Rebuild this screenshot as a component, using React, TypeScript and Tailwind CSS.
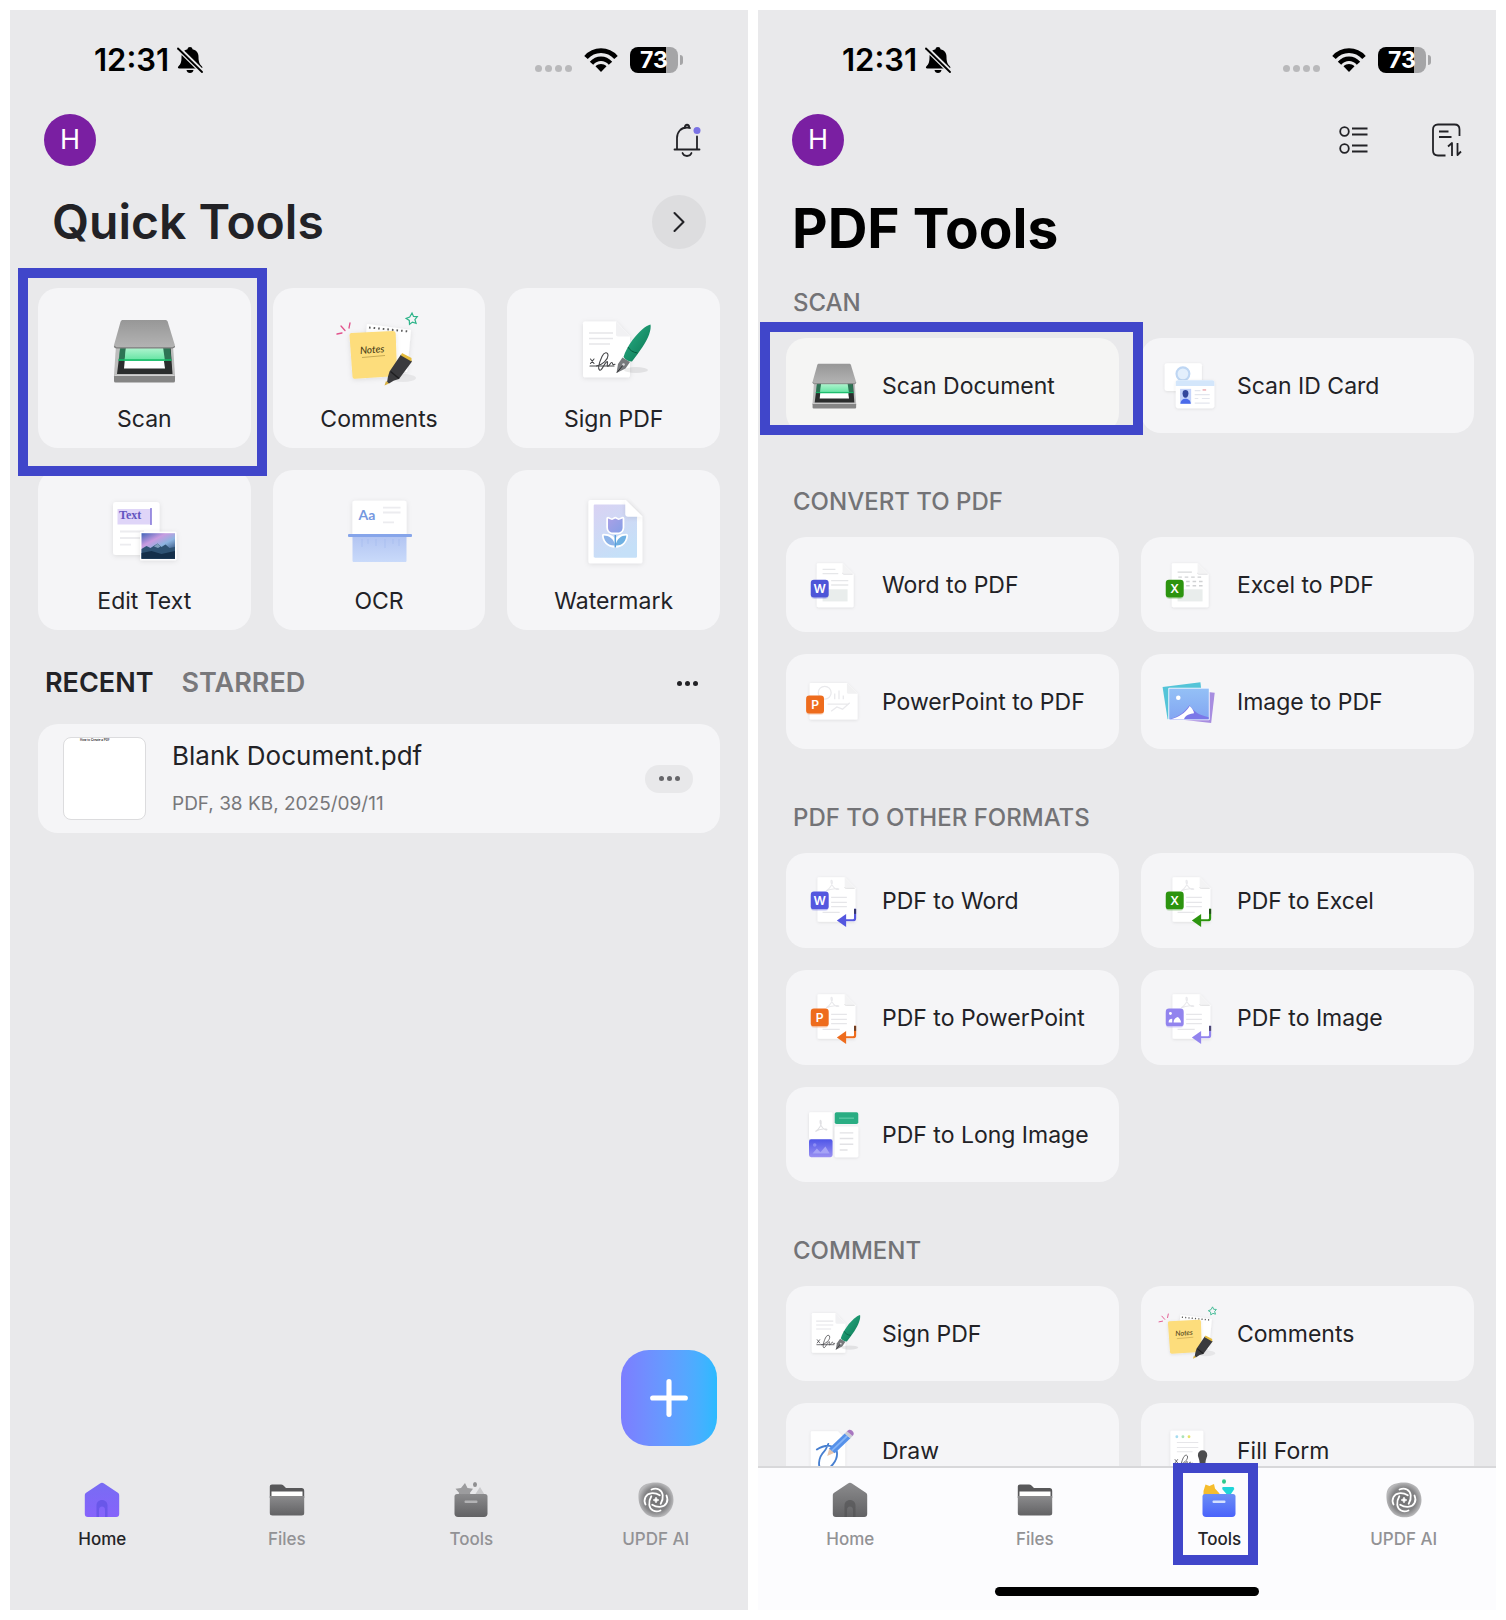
import type { ReactNode } from "react";
import { ChevronRight, Plus } from "lucide-react";

type Tool = {
  name: string;
  icon: ReactNode;
  highlighted?: boolean;
};

type Section = {
  title: string;
  tools: Tool[];
};

/* ---------- Tool artwork, all on an 84 x 84 canvas ---------- */

function Art({ children }: { children: ReactNode }) {
  return (
    <svg
      viewBox="0 0 84 84"
      className="h-full w-full overflow-visible"
      aria-hidden="true"
    >
      <defs>
        <filter id="paper" x="-30%" y="-30%" width="160%" height="160%">
          <feDropShadow dx="0" dy="1" stdDeviation="2.5" floodOpacity="0.1" />
        </filter>
      </defs>
      {children}
    </svg>
  );
}

function ScannerIcon() {
  return (
    <Art>
      <defs>
        <linearGradient id="lid" x1="0" y1="0" x2="0" y2="1">
          <stop offset="0" stopColor="#979797" />
          <stop offset="1" stopColor="#b4b4b4" />
        </linearGradient>
        <linearGradient id="glow" x1="0" y1="0" x2="0" y2="1">
          <stop offset="0" stopColor="#b5f5d2" />
          <stop offset="1" stopColor="#5fe3a0" />
        </linearGradient>
      </defs>
      <path d="M14 36h57l2 30-1 2H13l-1-2z" fill="#bdbdbd" />
      <path d="M18.500 37h50l2 28H15z" fill="#2b2d2d" />
      <path d="M24 38h36l3 21.500H22z" fill="#fff" />
      <path d="M18 38h50l1.500 14H16.500z" fill="#2fae74" opacity="0.550" />
      <path d="M24 38h37l2 14H22.500z" fill="url(#glow)" />
      <path d="M16.500 51h53" stroke="#14b866" strokeWidth="1.300" />
      <rect x="12" y="66" width="61" height="7.500" rx="1.500" fill="#858585" />
      <path d="M12.500 66.500h60" stroke="#d2d2d2" strokeWidth="1.200" />
      <path
        d="M21 11h42c1.500 0 2.300.6 2.800 2l7 23c.5 2-.3 3-2 3H14c-1.800 0-2.500-1-2-3l6.500-23c.5-1.400 1.200-2 2.500-2z"
        fill="url(#lid)"
      />
      <path d="M12.500 37c.3 1.300 1 1.800 2 1.800h56c1.200 0 1.900-.6 2-1.800" fill="none" stroke="#7e7e7e" strokeWidth="1.200" />
    </Art>
  );
}

function CommentsIcon() {
  return (
    <Art>
      <g stroke="#e2528c" strokeWidth="1.300" strokeLinecap="round">
        <path d="M0 25l5-1M4 17l4 4.500M13 14l-1 5" />
      </g>
      <path d="M30 15l44 6-4 42-44-4z" fill="#fff" filter="url(#paper)" />
      <path d="M32 18.500l40 4" stroke="#5d5d5d" strokeWidth="2" strokeDasharray="1.600 3" />
      <path
        d="M75 4l1.500 3.400 3.800.2-2.400 3 1.200 3.700-3.600-1.200-3 2.200-.2-3.900-3.200-2 3.600-1.400z"
        fill="none"
        stroke="#2eb48a"
        strokeWidth="1.200"
      />
      <path
        d="M14.500 24l41-2c2 0 3 .8 3.200 2.500L60 64c0 2-1 3-3 3.200l-39 2.500c-1.500 0-2.300-.6-2.500-2L12.500 26.500c0-1.500.6-2.400 2-2.500z"
        fill="#fddd7c"
        filter="url(#paper)"
      />
      <g transform="rotate(-4 36 42)">
        <text x="23" y="44" fontSize="10" className="font-['Lato',sans-serif] font-medium italic" fill="#4b4017">
          Notes
        </text>
      </g>
      <path d="M25 48.500l23-2" stroke="#b89c48" strokeWidth="0.800" />
      <ellipse cx="66" cy="69" rx="13" ry="4" fill="#000" opacity="0.060" />
      <path d="M64 45.500l9.500 5 1.500 2-13 17.500-5 1.500-5 3-2-1 1-6 1.500-5z" fill="#3a3a3d" />
      <path d="M65 44l9.500 5v3.500l-10.500-6z" fill="#e6bd3e" />
      <path d="M53.500 62.500l8.500 7" stroke="#1f1f21" strokeWidth="1.500" />
      <path d="M49 72l3 2.500-4.500 2z" fill="#d8b040" />
    </Art>
  );
}

function Signature() {
  return (
    <g fill="none" stroke="#47484b" strokeWidth="1.100" strokeLinecap="round" strokeLinejoin="round">
      <path d="M18.500 50l3.500 4.500M22 50l-3.500 4.500" />
      <path d="M18 57h24" />
      <path d="M24.500 57c6-1 11.500-6.500 11.500-10.500 0-4-4-3.500-6 1-2 4.500-4.500 12-2.500 13.500s4.500-6 7-8-.5 4.500 1.500 4.200 2.300-4 3.800-3.700-.3 3.200 3.200 1.700" />
    </g>
  );
}

function SignIcon() {
  return (
    <Art>
      <defs>
        <linearGradient id="pen" x1="0" y1="0" x2="1" y2="1">
          <stop offset="0" stopColor="#2bb389" />
          <stop offset="1" stopColor="#0a7350" />
        </linearGradient>
      </defs>
      <path
        d="M13 12.500h31l14 15V66c0 1.500-.6 2.300-2 2.300H13c-1.500 0-2-.8-2-2.300V14.500c0-1.300.7-2 2-2z"
        fill="#fff"
        filter="url(#paper)"
      />
      <path d="M44 12.500l14 15H46c-1.500 0-2-.7-2-2z" fill="#f1f1f3" />
      <path d="M17 24h24M17 29.500h24M17 35h21" stroke="#e6e6e9" strokeWidth="1.500" />
      <Signature />
      <ellipse cx="64" cy="61" rx="12" ry="3" fill="#000" opacity="0.080" />
      <path d="M50.500 48.500l7.500 4.500-4.500 6.500-9 4.500 1.500-9z" fill="#77797c" />
      <path d="M45 63.500l6.500-8" stroke="#2c2d30" strokeWidth="1" />
      <circle cx="51.500" cy="55.500" r="1.300" fill="#d9d9db" />
      <path d="M78.500 15.500c1 5-2 14-8 22.500-3.500 5-7 10-10.500 14.500-3.500 0-7-2-8.500-4.500 1.500-5 4.500-11 9-17 6-7.500 13-14.500 18-15.500z" fill="url(#pen)" />
      <path d="M56 38c1.500 3 5 5.500 9.500 6" stroke="#075c40" strokeWidth="1" fill="none" />
    </Art>
  );
}

function EditTextIcon() {
  return (
    <Art>
      <defs>
        <linearGradient id="dusk" x1="0" y1="0" x2="0.700" y2="1">
          <stop offset="0" stopColor="#3f63b8" />
          <stop offset="0.350" stopColor="#c89be0" />
          <stop offset="0.600" stopColor="#8cb4e0" />
          <stop offset="1" stopColor="#17345e" />
        </linearGradient>
      </defs>
      <rect x="11" y="11" width="46.500" height="53" rx="3" fill="#fff" filter="url(#paper)" />
      <rect x="15.500" y="18" width="34" height="15.500" fill="#dfd5f8" />
      <text x="17" y="28" fontSize="12" className="font-['Liberation_Serif',serif] font-bold" fill="#6254bf">
        Text
      </text>
      <path d="M49 17v17" stroke="#6a5bd0" strokeWidth="1.200" />
      <path d="M18 40.500h24M18 47h20M18 53.700h11" stroke="#ececef" strokeWidth="1.800" />
      <rect x="38" y="40.700" width="36.500" height="28.500" rx="1" fill="#fff" filter="url(#paper)" />
      <rect x="39.500" y="42.200" width="33.500" height="25.500" fill="url(#dusk)" />
      <path d="M39.500 58l5-3 4 2 7-4.500 4 3.500 4-2.500 4 3.500 5.500-1v11.700H39.500z" fill="#2e5273" />
      <path d="M52 55.500l3.500-3 3 3-2.500 1.500z" fill="#7f9fbd" />
      <path d="M39.500 62l10-2 10 3 13.500-3v7.700H39.500z" fill="#142f4a" />
    </Art>
  );
}

function OcrIcon() {
  return (
    <Art>
      <defs>
        <linearGradient id="scanned" x1="0" y1="0" x2="0" y2="1">
          <stop offset="0" stopColor="#b3c5f2" />
          <stop offset="1" stopColor="#c9dafa" />
        </linearGradient>
      </defs>
      <path d="M18 9.700h49c1.800 0 2.500.8 2.500 2.500V45h-54V12c0-1.500.8-2.300 2.500-2.300z" fill="#fff" filter="url(#paper)" />
      <text x="21.500" y="29" fontSize="14" className="font-['Lato',sans-serif] font-bold" fill="#7698df">
        Aa
      </text>
      <path d="M46 16.700h17.500M46 21.500h17.500M46 31.300h11" stroke="#ececef" strokeWidth="1.800" />
      <path d="M15.500 46h54v23.500c0 1-.5 1.500-1.500 1.500H17c-1 0-1.500-.5-1.500-1.500z" fill="url(#scanned)" />
      <path d="M25 48v8M31 48v5M39 48v7M48 48v9M56 48v5M62 48v7" stroke="#a3b9ee" strokeWidth="0.600" />
      <rect x="11" y="43" width="64" height="3" rx="1" fill="#86a5ea" />
    </Art>
  );
}

function WatermarkIcon() {
  return (
    <Art>
      <defs>
        <linearGradient id="wash" x1="0" y1="0" x2="0.500" y2="1">
          <stop offset="0" stopColor="#d9d2f3" />
          <stop offset="1" stopColor="#c5e0f8" />
        </linearGradient>
        <linearGradient id="cup" x1="0" y1="0" x2="1" y2="1">
          <stop offset="0" stopColor="#a9a0e6" />
          <stop offset="1" stopColor="#869fe6" />
        </linearGradient>
      </defs>
      <path d="M18.500 9h35L70.300 25.500V70c0 1.500-.6 2.300-2 2.300H18.500c-1.300 0-2-.8-2-2.300V11.300c0-1.500.7-2.300 2-2.300z" fill="#fff" filter="url(#paper)" />
      <path d="M23 13.500h30.500v9c0 2 .8 3 2.800 3H65v40c0 .8-.4 1.200-1.200 1.200H23c-.8 0-1.300-.4-1.300-1.200V14.700c0-.8.500-1.200 1.300-1.200z" fill="url(#wash)" />
      <path d="M53.500 9l16.800 16.500H55.500c-1.300 0-2-.7-2-2z" fill="#fff" filter="url(#paper)" />
      <g stroke="#fff" strokeWidth="3.500" strokeLinejoin="round">
        <path d="M36 27.500l4 2 3.300-2 3.300 2 4-2v9c0 3-2 5-5 5h-4.600c-3 0-5-2-5-5z" />
        <path d="M43.300 55C36 55 32 50 31.700 44.500c5 0 10 2 11.600 7 1.600-5 6-7 11-7C54 50 50 55 43.300 55z" />
      </g>
      <path d="M36 27.500l4 1.500 3.300-1.500 3.300 1.500 4-1.500v9c0 3-2 5-5 5h-4.600c-3 0-5-2-5-5z" fill="url(#cup)" />
      <path d="M43 54.500C36 55 32 50 31.700 44.500c5 0 10.300 3 11.300 10z" fill="#8db3e8" />
      <path d="M43.700 54.500C50.500 55 54 50 54.300 44.500c-5 0-9.600 3-10.600 10z" fill="#6fb0e2" />
      <path d="M43.300 44v12.500" stroke="#5aa0dc" strokeWidth="1.500" />
    </Art>
  );
}

function IdCardIcon() {
  return (
    <Art>
      <rect x="8" y="10" width="52" height="39" rx="3" fill="#fff" filter="url(#paper)" />
      <circle cx="33.500" cy="25" r="9" fill="#e3effc" stroke="#bed6f3" strokeWidth="3" />
      <rect x="23.500" y="34" width="54" height="39" rx="3" fill="#fff" filter="url(#paper)" />
      <path d="M26.500 34h48c2 0 3 1 3 3v5h-54v-5c0-2 1-3 3-3z" fill="#d3e6fb" />
      <rect x="29.500" y="46" width="15.500" height="21" fill="#c3d3fb" />
      <path d="M33 52c0-3 1.500-4.500 4-4.500s4.200 1.500 4.200 4.500-1.500 6.500-4.200 6.500-4-3.500-4-6.500z" fill="#32469c" />
      <path d="M30 67c.5-5 3-7 7-7s7 2 7.500 7z" fill="#4b6bea" />
      <path d="M50 48.500h8M50 54h21M50 59.500h5M60 59.500h11M50 66h21" stroke="#e3e6ee" strokeWidth="1.600" />
      <path d="M61 47.500h5" stroke="#efb7bd" strokeWidth="2.400" />
    </Art>
  );
}

function Badge({
  x,
  y,
  color,
  letter,
}: {
  x: number;
  y: number;
  color: string;
  letter?: string;
}) {
  return (
    <g>
      <rect x={x} y={y + 2} width="25" height="25" rx="5" fill={color} opacity="0.250" />
      <rect x={x} y={y} width="25" height="25" rx="4.500" fill={color} />
      {letter ? (
        <text
          x={x + 12.5}
          y={y + 18.5}
          fontSize="17"
          textAnchor="middle"
          className="font-['Inter',sans-serif] font-semibold"
          fill="#fff"
        >
          {letter}
        </text>
      ) : (
        <g transform={`translate(${x} ${y})`} fill="#fff">
          <circle cx="6.500" cy="7" r="2" />
          <path d="M4 19c0-3 2-4.500 5-4.500v5H4zM11 19.500c0-5 3.500-7 6-7.500 2 2 4 4 4.500 7.500z" />
        </g>
      )}
    </g>
  );
}

function FileToPdfIcon({ color, letter }: { color: string; letter: string }) {
  return (
    <Art>
      <path d="M20 11.500h34l15.500 15.500v44c0 1.500-.6 2-2 2H20c-1.400 0-2-.5-2-2V13.500c0-1.300.6-2 2-2z" fill="#fff" filter="url(#paper)" />
      <path d="M54 11.500L69.500 27H56c-1.400 0-2-.6-2-2z" fill="#f3f3f4" />
      <path d="M54 25c0 1.400.6 2 2 2h12" fill="none" stroke="#e1e1e3" strokeWidth="1.200" />
      {letter === "X" ? (
        <g strokeWidth="2">
          <path d="M26 24h20" stroke="#dcdddf" />
          <path d="M27 31h32M38 37h24M38 43h24" stroke="#d0d1d3" strokeDasharray="5 4" />
        </g>
      ) : (
        <path d="M26 20h18M26 26h22M38 36h24M38 42h24" stroke="#e6e7e9" strokeWidth="1.800" />
      )}
      <rect x="26" y="48" width="35" height="17" fill="#e9edec" />
      <Badge x={9.5} y={34.5} color={color} letter={letter} />
    </Art>
  );
}

function SlidesToPdfIcon() {
  return (
    <Art>
      <path d="M10 15.500h50l15 15V65c0 1-.5 1.500-1.500 1.500H10c-1.200 0-2-.5-2-1.500V17c0-1 .8-1.500 2-1.500z" fill="#fff" filter="url(#paper)" />
      <path d="M60 15.500l15 15H62c-1.400 0-2-.6-2-2z" fill="#f1f1f2" />
      <g fill="none" stroke="#e9e9ec" strokeWidth="1.800">
        <circle cx="29" cy="29" r="9" />
        <path d="M43 38v-8M49 38V26M55 38v-5M38 55l8-6 8 3 10-9M33 45h30" />
      </g>
      <Badge x={3} y={33} color="#ee6c1d" letter="P" />
    </Art>
  );
}

function ImageToPdfIcon() {
  return (
    <Art>
      <defs>
        <linearGradient id="sky" x1="0" y1="0" x2="0" y2="1">
          <stop offset="0" stopColor="#94c0f6" />
          <stop offset="1" stopColor="#82a6f2" />
        </linearGradient>
      </defs>
      <path d="M5 21l53-6.500 5 45-51 6.500z" fill="#54c4d8" />
      <path d="M24 23l54 6-5 42.500-52-6z" fill="#a78de0" />
      <rect x="13" y="22" width="58" height="45.500" rx="1.500" fill="#f5f8ff" />
      <rect x="14.300" y="23.300" width="55.400" height="42.900" fill="url(#sky)" />
      <circle cx="27" cy="36" r="3.200" fill="#fff" />
      <path d="M14.500 66.200c10-2 20-8 28-19.500 7 9 13 14 27 16.500v3z" fill="#7b78e8" />
      <path d="M17 66.200c11-3 19-8 26-18.500 4 4 6 8 6 10-5 1-12 2-14 8.500z" fill="#fff" />
    </Art>
  );
}

function PdfToFileIcon({ color, letter }: { color: string; letter?: string }) {
  return (
    <Art>
      <path d="M21 8.700h36l15 15.500V69c0 1.300-.6 2-2 2H21c-1.400 0-2-.7-2-2V10.500c0-1.300.6-1.800 2-1.800z" fill="#fff" filter="url(#paper)" />
      <path d="M57 8.700l15 15.500H59c-1.400 0-2-.6-2-2z" fill="#f3f3f4" />
      <path d="M57 22.500c0 1.300.6 1.900 2 1.900h12" fill="none" stroke="#dedee0" strokeWidth="1.200" />
      <path d="M31 28c6-4 10-11 8.500-14s-3 1 0 6 7 7 9 5.500-10-1-17.500 2.500z" fill="none" stroke="#e9e9ec" strokeWidth="1.500" />
      <path d="M38 37h22M38 44h22M38 50h22M26 58h24" stroke="#e6e6e9" strokeWidth="1.800" />
      <Badge x={9.5} y={28.7} color={color} letter={letter} />
      <path d="M71.500 53v13c0 2-1 3-3 3H57" fill="none" stroke={color} strokeWidth="3" />
      <path d="M71.500 53v7" stroke="#202124" strokeWidth="3" opacity="0.600" />
      <path d="M46 69.300l13-9v18z" fill={color} />
    </Art>
  );
}

function LongImageIcon() {
  return (
    <Art>
      <defs>
        <linearGradient id="shot" x1="0" y1="0" x2="0" y2="1">
          <stop offset="0" stopColor="#4f56e8" />
          <stop offset="1" stopColor="#9a90f2" />
        </linearGradient>
      </defs>
      <rect x="7" y="10" width="33" height="38" rx="2" fill="#fff" filter="url(#paper)" />
      <path d="M16 37c6-4 9-10 8-14s-3 1 0 6 7 7 8 5.500-9-1.500-16 2.500z" fill="none" stroke="#e0e0e3" strokeWidth="1.500" />
      <rect x="7" y="48" width="33" height="25" rx="3" fill="url(#shot)" />
      <circle cx="15" cy="56" r="2.500" fill="#8d8df4" />
      <path d="M12 68l6-7 5 5 7-8 6 10z" fill="#a6a3f6" />
      <rect x="43" y="30" width="33" height="43" rx="2" fill="#fff" filter="url(#paper)" />
      <path d="M50 39h19M50 47h19M50 55h19M50 63h11" stroke="#e2e2e5" strokeWidth="2" />
      <rect x="43" y="10" width="33" height="16.500" rx="2.500" fill="#2aad83" />
      <path d="M49 18.500h21" stroke="#57c6a2" strokeWidth="2" />
    </Art>
  );
}

function DrawIcon() {
  return (
    <Art>
      <path d="M11.500 14.500h36l10 10V84h-48V16.500c0-1.300.6-2 2-2z" fill="#fff" filter="url(#paper)" />
      <path d="M18 40c12-8 26-7 28 3 2 12-10 26-19 25s-7-17 1-25c3-3 5-9 6-11" fill="none" stroke="#477fd0" strokeWidth="2.600" strokeLinecap="round" />
      <path d="M32.500 49l3-11 8 6z" fill="#e8c6ac" />
      <path d="M35 38.500l22-21 8 6.500-22 21z" fill="#5591ea" />
      <path d="M39 41.500l22-21" stroke="#83b3f6" strokeWidth="2.500" />
      <path d="M57 17.500l3-3 8 6.500-3 3z" fill="#c9cbd3" />
      <path d="M60 14.500c2.500-3 5-3 7.500-1s3 5 .5 7.500z" fill="#a877c0" />
    </Art>
  );
}

function FillFormIcon() {
  return (
    <Art>
      <rect x="16" y="13.500" width="46" height="72" rx="2" fill="#fff" filter="url(#paper)" />
      <circle cx="25" cy="22" r="2" fill="#a5dcf0" />
      <circle cx="33.500" cy="22" r="2" fill="#a9e3b9" />
      <circle cx="42" cy="22" r="2" fill="#e6e36a" />
      <path d="M25 30h30M25 37h30M25 43h22" stroke="#e6e6e9" strokeWidth="1.500" />
      <g transform="translate(4 4)">
        <Signature />
      </g>
      <path d="M61 41c4 0 6.500 3 6.500 6.500S65 53 65 60l3 4H54l3-4c0-7-2.500-9-2.500-12.500S57 41 61 41z" fill="#4c4c4e" />
      <rect x="50" y="63" width="22" height="6" rx="2" fill="#38383a" />
    </Art>
  );
}

/* ---------- Data ---------- */

const quickTools: Tool[] = [
  { name: "Scan", icon: <ScannerIcon />, highlighted: true },
  { name: "Comments", icon: <CommentsIcon /> },
  { name: "Sign PDF", icon: <SignIcon /> },
  { name: "Edit Text", icon: <EditTextIcon /> },
  { name: "OCR", icon: <OcrIcon /> },
  { name: "Watermark", icon: <WatermarkIcon /> },
];

const sections: Section[] = [
  {
    title: "SCAN",
    tools: [
      { name: "Scan Document", icon: <ScannerIcon />, highlighted: true },
      { name: "Scan ID Card", icon: <IdCardIcon /> },
    ],
  },
  {
    title: "CONVERT TO PDF",
    tools: [
      { name: "Word to PDF", icon: <FileToPdfIcon color="#4d55d8" letter="W" /> },
      { name: "Excel to PDF", icon: <FileToPdfIcon color="#2c940f" letter="X" /> },
      { name: "PowerPoint to PDF", icon: <SlidesToPdfIcon /> },
      { name: "Image to PDF", icon: <ImageToPdfIcon /> },
    ],
  },
  {
    title: "PDF TO OTHER FORMATS",
    tools: [
      { name: "PDF to Word", icon: <PdfToFileIcon color="#5457df" letter="W" /> },
      { name: "PDF to Excel", icon: <PdfToFileIcon color="#2c940f" letter="X" /> },
      { name: "PDF to PowerPoint", icon: <PdfToFileIcon color="#ee6c1d" letter="P" /> },
      { name: "PDF to Image", icon: <PdfToFileIcon color="#9284ee" /> },
      { name: "PDF to Long Image", icon: <LongImageIcon /> },
    ],
  },
  {
    title: "COMMENT",
    tools: [
      { name: "Sign PDF", icon: <SignIcon /> },
      { name: "Comments", icon: <CommentsIcon /> },
      { name: "Draw", icon: <DrawIcon /> },
      { name: "Fill Form", icon: <FillFormIcon /> },
    ],
  },
];

/* ---------- Shared chrome ---------- */

function StatusBar() {
  return (
    <div className="flex h-9 items-center pr-[65px] pl-[84px]">
      <span className="text-[31px] font-semibold text-black">12:31</span>
      <svg viewBox="0 0 26 26" className="ml-2 h-[26px] w-[26px]" aria-label="Silent">
        <path
          d="M13 0c1.500 0 2.300.9 2.500 2.200C19.500 3.200 21.500 6 21.500 10c0 5 1 7 3.500 9.500.8 1 .3 2-1 2H2.300c-1.300 0-1.800-1-1-2C3.800 17 4.500 15 4.500 10c0-4 2-6.800 6-7.800C10.700.9 11.500 0 13 0zM9.500 23h7c-.3 1.800-1.500 3-3.500 3s-3.200-1.200-3.500-3z"
          fill="#000"
        />
        <path d="M1 1l25 24.500" stroke="#e9e9ea" strokeWidth="5" />
        <path d="M1 1.500l24 23.500" stroke="#000" strokeWidth="1.800" strokeLinecap="round" />
      </svg>
      <div className="ml-auto flex gap-[3px] pt-4">
        {[0, 1, 2, 3].map((dot) => (
          <span key={dot} className="h-[7px] w-[7px] rounded-full bg-[#b9b9bb]" />
        ))}
      </div>
      <svg viewBox="0 0 34 24" className="ml-3 h-6 w-[34px]" aria-label="Wi-Fi">
        <g fill="none" stroke="#000" strokeWidth="4.600">
          <path d="M2 9.500C10 .3 24 .3 32 9.500" />
          <path d="M7.500 15.300c5.500-6 13.500-6 19 0" />
        </g>
        <path d="M17 24l-5.500-5.800c3-3 8-3 11 0z" fill="#000" />
      </svg>
      <div className="ml-3 flex h-[26px] w-12 items-center justify-center rounded-lg bg-linear-to-r from-black from-75% to-[#a5a5a7] to-75% text-[23px] font-bold text-white">
        73
      </div>
      <span className="ml-0.5 h-2.5 w-[3px] rounded-r-full bg-[#a5a5a7]" />
    </div>
  );
}

function Avatar() {
  return (
    <button
      type="button"
      aria-label="Account"
      className="flex h-[52px] w-[52px] items-center justify-center rounded-full bg-[#7a1fa2] text-[27px] text-white"
    >
      H
    </button>
  );
}

function Highlight({ className }: { className: string }) {
  return (
    <span
      aria-hidden="true"
      className={`pointer-events-none absolute z-10 border-10 border-[#4046ca] ${className}`}
    />
  );
}

function HomeIcon({ active }: { active: boolean }) {
  return (
    <svg viewBox="0 0 36 36" className="h-9 w-9" aria-hidden="true">
      <defs>
        <linearGradient id="homeOn" x1="0" y1="0" x2="0" y2="1">
          <stop offset="0" stopColor="#786cf3" />
          <stop offset="1" stopColor="#8663fb" />
        </linearGradient>
        <linearGradient id="grayFill" x1="0" y1="0" x2="0" y2="1">
          <stop offset="0" stopColor="#8b8b8d" />
          <stop offset="1" stopColor="#626264" />
        </linearGradient>
      </defs>
      <path
        d="M16 1.500c1.300-.9 2.700-.9 4 0l13.500 9c1.200.8 1.700 1.700 1.700 3V32c0 2-1 3-3 3H3.800c-2 0-3-1-3-3V13.500c0-1.300.5-2.200 1.700-3z"
        fill={active ? "url(#homeOn)" : "url(#grayFill)"}
      />
      <path
        d="M12.500 35V23.500c0-3.200 2.300-5.500 5.500-5.500s5.500 2.300 5.500 5.500V35h-2.500v-7c0-2-1-3.500-3-3.500s-3 1.500-3 3.500v7z"
        fill={active ? "#5a4ce0" : "#505052"}
        opacity="0.600"
      />
    </svg>
  );
}

function FilesIcon() {
  return (
    <svg viewBox="0 0 36 36" className="h-9 w-9" aria-hidden="true">
      <path d="M3 2.500h9c1 0 1.800.3 2.500 1L17 6h15.500c1.800 0 2.700.9 2.700 2.700V16H.8V4.700c0-1.400.8-2.200 2.200-2.200z" fill="#58585a" />
      <rect x="2.500" y="9.500" width="31" height="8" fill="#fff" />
      <path d="M.8 14h34.400v17c0 1.800-.9 2.500-2.700 2.500h-29C1.700 33.500.8 32.800.8 31z" fill="url(#grayFill)" />
    </svg>
  );
}

function ToolsIcon({ active }: { active: boolean }) {
  return (
    <svg viewBox="0 0 36 36" className="h-9 w-9 overflow-visible" aria-hidden="true">
      <defs>
        <linearGradient id="boxOn" x1="0" y1="0" x2="0" y2="1">
          <stop offset="0" stopColor="#6b8ef5" />
          <stop offset="1" stopColor="#4a63fb" />
        </linearGradient>
      </defs>
      {active ? (
        <g>
          <path d="M4.500 2.500l4 1.500L13 2l1 4.500 4.500 5V14H2.500V9z" fill="#f6bd2c" />
          <path d="M21.500 5h11l.8 2-5.300 8-6.800-8z" fill="#1fd5d8" />
          <ellipse cx="23" cy="-0.500" rx="2" ry="2.200" fill="#2cc98c" />
        </g>
      ) : (
        <g>
          <path d="M12 1l2.500 5 5.500.7-3 4 1 5H5l1-5-3.500-4 5.500-.7z" fill="#9c9c9e" />
          <path d="M27 5l6 10H20.500z" fill="#c9c9cb" />
          <ellipse cx="22" cy="2.500" rx="2" ry="2.600" fill="#8f8f91" />
        </g>
      )}
      <path
        d="M4 12h28c1.600 0 2.500.9 2.500 2.500v17c0 2-1.200 3.500-3.500 3.500H5c-2.300 0-3.500-1.500-3.500-3.500v-17C1.500 12.900 2.400 12 4 12z"
        fill={active ? "url(#boxOn)" : "url(#grayFill)"}
      />
      <rect x="11.500" y="18.500" width="13" height="2.500" rx="1" fill={active ? "#d3e0ff" : "#b3b3b5"} />
    </svg>
  );
}

function AiIcon() {
  const arm = "M13.500 7.500c5.500-2.500 10.500.5 11.200 5.500.4 3.300-.3 6-2 8.800";

  return (
    <svg viewBox="0 0 36 36" className="h-9 w-9" aria-hidden="true">
      <defs>
        <radialGradient id="aiFill">
          <stop offset="0" stopColor="#6d6d6f" />
          <stop offset="0.700" stopColor="#858587" />
          <stop offset="1" stopColor="#b8b8ba" />
        </radialGradient>
      </defs>
      <path d="M15 .6c6-.8 13 1 16.500 5.400 3 4 4.500 9 3.900 14-.7 6-4.400 11.500-9.400 14-4.500 2-11 1.800-15.500-.5C5.500 31 1.500 25 .7 18.500 0 13 .5 8.500 3 5.500 5.500 2.500 10 1.300 15 .6z" fill="url(#aiFill)" />
      <g fill="none" stroke="#fff" strokeWidth="1.800" strokeLinecap="round">
        {[0, 90, 180, 270].map((angle) => (
          <path key={angle} d={arm} transform={`rotate(${angle} 18 18)`} />
        ))}
      </g>
      <path d="M18 15l1 2 2 1-2 1-1 2-1-2-2-1 2-1z" fill="#fff" stroke="#fff" strokeWidth="0.600" />
    </svg>
  );
}

function TabBar({
  active,
  className,
  children,
}: {
  active: "Home" | "Tools";
  className: string;
  children?: ReactNode;
}) {
  const tabs = [
    { name: "Home", icon: <HomeIcon active={active === "Home"} /> },
    { name: "Files", icon: <FilesIcon /> },
    { name: "Tools", icon: <ToolsIcon active={active === "Tools"} /> },
    { name: "UPDF AI", icon: <AiIcon /> },
  ];

  return (
    <nav className={`flex h-36 shrink-0 flex-col border-t-2 pt-3.5 ${className}`}>
      <div className="grid grid-cols-4">
        {tabs.map((tab) => (
          <button
            key={tab.name}
            type="button"
            className={`relative flex flex-col items-center gap-[11px] text-[17px] leading-5 font-medium ${
              tab.name === active ? "text-[#242427]" : "text-[#929295]"
            }`}
          >
            {tab.icon}
            {tab.name}
            {tab.name === "Tools" && active === "Tools" && (
              <Highlight className="-top-[19px] right-[54px] -bottom-4 left-[46px]" />
            )}
          </button>
        ))}
      </div>
      {children}
    </nav>
  );
}

function Dots({ className }: { className: string }) {
  return (
    <>
      <span className={`h-[5px] w-[5px] rounded-full ${className}`} />
      <span className={`h-[5px] w-[5px] rounded-full ${className}`} />
      <span className={`h-[5px] w-[5px] rounded-full ${className}`} />
    </>
  );
}

/* ---------- Screens ---------- */

function HomeScreen() {
  return (
    <section className="flex min-h-0 flex-col overflow-hidden bg-[#e9e9eb] pt-8">
      <StatusBar />

      <header className="mt-9 flex items-center justify-between pr-11 pl-[34px]">
        <Avatar />
        <button type="button" aria-label="Notifications">
          <svg viewBox="0 0 34 34" className="h-[34px] w-[34px]" fill="none" stroke="#222226" strokeWidth="1.800" strokeLinecap="round">
            <path d="M4.500 26.500h25M7 26.500V15c0-6 4-10.500 10-10.500 1 0 2 .1 3 .5M27 26.500V13.500" />
            <path d="M14.800 4.500c0-3.700 4.400-3.700 4.400 0M12.500 30c1.500 4 7.500 4 9 0" />
            <circle cx="27" cy="7.500" r="3.500" fill="#7a72e4" stroke="none" />
          </svg>
        </button>
      </header>

      <div className="mt-[29px] flex items-center justify-between px-[42px]">
        <h1 className="text-[48px] leading-[54px] font-semibold text-[#222226]">
          Quick Tools
        </h1>
        <button
          type="button"
          aria-label="All quick tools"
          className="flex h-[54px] w-[54px] items-center justify-center rounded-full bg-[#dddddf]"
        >
          <ChevronRight className="h-9 w-9 text-[#222226]" strokeWidth={1.4} />
        </button>
      </div>

      <div className="mt-[39px] grid grid-cols-3 gap-[22px] px-7">
        {quickTools.map((tool) => (
          <button
            key={tool.name}
            type="button"
            className="relative flex h-40 flex-col items-center gap-2.5 rounded-[20px] bg-[#f5f5f7] pt-[21px] text-[23px] leading-8 text-[#222226]"
          >
            <span className="h-[84px] w-[84px] shrink-0">{tool.icon}</span>
            {tool.name}
            {tool.highlighted && (
              <Highlight className="-top-5 -right-4 -bottom-7 -left-5" />
            )}
          </button>
        ))}
      </div>

      <div className="mt-[35px] flex items-center gap-7 pr-[50px] pl-[35px] text-[27px] leading-9 font-semibold">
        <button type="button" className="text-[#222226]">
          RECENT
        </button>
        <button type="button" className="text-[#78787b]">
          STARRED
        </button>
        <button type="button" aria-label="List options" className="ml-auto flex gap-[3px]">
          <Dots className="bg-[#222226]" />
        </button>
      </div>

      <article className="mx-7 mt-[23px] flex items-center gap-[26px] rounded-[20px] bg-[#f5f5f7] py-[13px] pr-[27px] pl-[25px]">
        <div className="h-[83px] w-[83px] rounded-lg border border-[#dcdcde] bg-white pl-4 text-[3px] leading-[5px] font-semibold text-[#222226]">
          How to Create a PDF
        </div>
        <div>
          <h2 className="text-[26px] leading-8 text-[#222226]">Blank Document.pdf</h2>
          <p className="mt-[18px] text-[19px] leading-7 text-[#78787b]">
            PDF, 38 KB, 2025/09/11
          </p>
        </div>
        <button
          type="button"
          aria-label="File options"
          className="ml-auto flex h-7 w-12 items-center justify-center gap-[3px] rounded-full bg-[#e8e8ea]"
        >
          <Dots className="bg-[#66666a]" />
        </button>
      </article>

      <button
        type="button"
        aria-label="Add file"
        className="mt-auto mr-[31px] mb-5 flex h-24 w-24 shrink-0 items-center justify-center self-end rounded-[28px] bg-linear-to-r from-[#7c7dff] to-[#2abaff]"
      >
        <Plus className="h-14 w-14 text-white" strokeWidth={2.2} />
      </button>

      <TabBar active="Home" className="border-transparent" />
    </section>
  );
}

function ToolsScreen() {
  return (
    <section className="flex min-h-0 flex-col overflow-hidden bg-[#e9e9eb] pt-8">
      <StatusBar />

      <header className="mt-9 flex items-center pr-8 pl-[34px]">
        <Avatar />
        <button type="button" aria-label="List view" className="ml-auto">
          <svg viewBox="0 0 34 34" className="h-[34px] w-[34px]" fill="none" stroke="#222226" strokeWidth="1.800">
            <circle cx="8.500" cy="8.500" r="4.300" />
            <circle cx="8.500" cy="25.500" r="4.300" />
            <path d="M16 5.500h15.500M16 11.500h15.500M16 22.500h15.500M16 28.500h15.500" />
          </svg>
        </button>
        <button type="button" aria-label="Sort tools" className="ml-[60px]">
          <svg viewBox="0 0 34 34" className="h-[34px] w-[34px]" fill="none" stroke="#222226" strokeWidth="1.800" strokeLinejoin="round">
            <path d="M15.500 32.500H8c-3.300 0-5-1.700-5-5V6.500c0-3.300 1.700-5 5-5h16.500c3.300 0 5 1.700 5 5V13" />
            <path d="M9 8.500h9.500M9 14h12.500" />
            <path d="M18 23.500l4-3.500v13M27.500 20v12l3.500-3.500" />
          </svg>
        </button>
      </header>

      <div className="min-h-0 flex-1 overflow-hidden">
        <h1 className="mt-[30px] pl-[34px] text-[55px] leading-[64px] font-bold text-black">
          PDF Tools
        </h1>

        <div className="mt-[27px] flex flex-col gap-[53px] pr-[22px] pl-7">
          {sections.map((section) => (
            <section key={section.title}>
              <h2 className="pl-[7px] text-2xl leading-8 font-medium text-[#737376]">
                {section.title}
              </h2>

              <div className="mt-[19px] grid grid-cols-2 gap-[22px]">
                {section.tools.map((tool) => (
                  <button
                    key={tool.name}
                    type="button"
                    className={`relative flex h-[95px] items-center gap-[18px] rounded-[20px] pl-[18px] text-[23px] leading-8 text-[#222226] ${
                      tool.highlighted ? "z-10 bg-[#f5f5f4]" : "bg-[#f5f5f7]"
                    }`}
                  >
                    <span className="h-[60px] w-[60px] shrink-0">{tool.icon}</span>
                    {tool.name}
                    {tool.highlighted && (
                      <Highlight className="-top-4 -right-6 -bottom-0.5 -left-[26px]" />
                    )}
                  </button>
                ))}
              </div>
            </section>
          ))}
        </div>
      </div>

      <TabBar active="Tools" className="relative z-10 border-[#d8d8da] bg-[#fcfcfe]">
        <span className="mx-auto mt-auto mb-3.5 h-[9px] w-[264px] rounded-full bg-black" />
      </TabBar>
    </section>
  );
}

export default function App() {
  return (
    <main className="grid h-screen grid-cols-2 grid-rows-1 gap-2.5 bg-white p-2.5 font-['Inter',sans-serif]">
      <HomeScreen />
      <ToolsScreen />
    </main>
  );
}
